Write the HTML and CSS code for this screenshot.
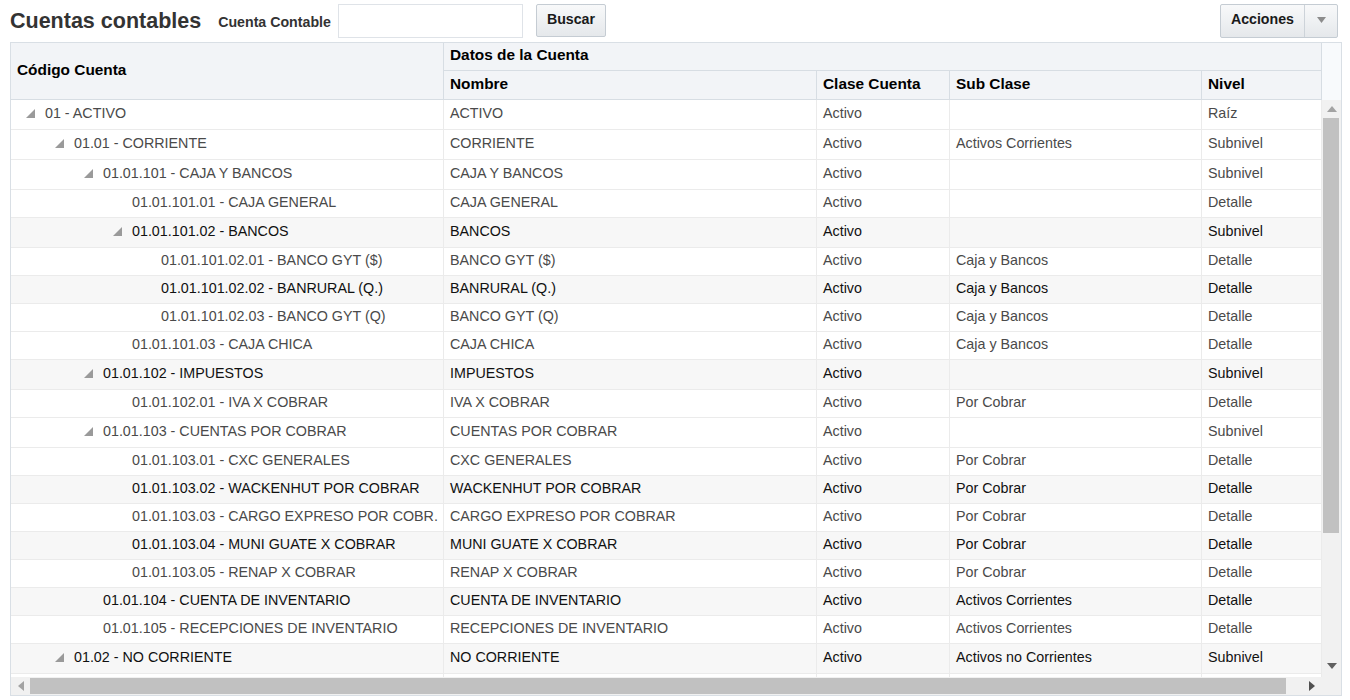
FILE: index.html
```html
<!DOCTYPE html>
<html lang="es">
<head>
<meta charset="utf-8">
<title>Cuentas contables</title>
<link rel="stylesheet" href="styles.css">
</head>
<body>
<div class="page">
  <div class="toolbar">
    <h1 class="title">Cuentas contables</h1>
    <label class="label" for="cta">Cuenta Contable</label>
    <input class="input" id="cta" type="text">
    <button class="btn" type="button">Buscar</button>
    <div class="spacer"></div>
    <div class="split">
      <span class="split-main">Acciones</span>
      <span class="split-arrow"><svg width="9" height="6" viewBox="0 0 9 6"><polygon points="0,0 9,0 4.5,6" fill="#8c8c8c"/></svg></span>
    </div>
  </div>

  <div class="grid">
    <div class="head">
      <div class="head-cols">
        <div class="hc hc-code">Código Cuenta</div>
        <div class="hc hc-group">Datos de la Cuenta</div>
        <div class="hc">Nombre</div>
        <div class="hc">Clase Cuenta</div>
        <div class="hc">Sub Clase</div>
        <div class="hc">Nivel</div>
      </div>
      <div class="head-fill"></div>
    </div>

    <div class="body">
      <div class="rows">
        <div class="row t"><div class="c tree l0"><svg class="tg" viewBox="0 0 9 9"><polygon points="9,0 9,9 0,9"/></svg>01 - ACTIVO</div><div class="c">ACTIVO</div><div class="c">Activo</div><div class="c"></div><div class="c">Raíz</div></div>
        <div class="row t"><div class="c tree l1"><svg class="tg" viewBox="0 0 9 9"><polygon points="9,0 9,9 0,9"/></svg>01.01 - CORRIENTE</div><div class="c">CORRIENTE</div><div class="c">Activo</div><div class="c">Activos Corrientes</div><div class="c">Subnivel</div></div>
        <div class="row t"><div class="c tree l2"><svg class="tg" viewBox="0 0 9 9"><polygon points="9,0 9,9 0,9"/></svg>01.01.101 - CAJA Y BANCOS</div><div class="c">CAJA Y BANCOS</div><div class="c">Activo</div><div class="c"></div><div class="c">Subnivel</div></div>
        <div class="row"><div class="c tree l3"><span class="sp"></span>01.01.101.01 - CAJA GENERAL</div><div class="c">CAJA GENERAL</div><div class="c">Activo</div><div class="c"></div><div class="c">Detalle</div></div>
        <div class="row t band"><div class="c tree l3"><svg class="tg" viewBox="0 0 9 9"><polygon points="9,0 9,9 0,9"/></svg>01.01.101.02 - BANCOS</div><div class="c">BANCOS</div><div class="c">Activo</div><div class="c"></div><div class="c">Subnivel</div></div>
        <div class="row"><div class="c tree l4"><span class="sp"></span>01.01.101.02.01 - BANCO GYT ($)</div><div class="c">BANCO GYT ($)</div><div class="c">Activo</div><div class="c">Caja y Bancos</div><div class="c">Detalle</div></div>
        <div class="row band"><div class="c tree l4"><span class="sp"></span>01.01.101.02.02 - BANRURAL (Q.)</div><div class="c">BANRURAL (Q.)</div><div class="c">Activo</div><div class="c">Caja y Bancos</div><div class="c">Detalle</div></div>
        <div class="row"><div class="c tree l4"><span class="sp"></span>01.01.101.02.03 - BANCO GYT (Q)</div><div class="c">BANCO GYT (Q)</div><div class="c">Activo</div><div class="c">Caja y Bancos</div><div class="c">Detalle</div></div>
        <div class="row"><div class="c tree l3"><span class="sp"></span>01.01.101.03 - CAJA CHICA</div><div class="c">CAJA CHICA</div><div class="c">Activo</div><div class="c">Caja y Bancos</div><div class="c">Detalle</div></div>
        <div class="row t band"><div class="c tree l2"><svg class="tg" viewBox="0 0 9 9"><polygon points="9,0 9,9 0,9"/></svg>01.01.102 - IMPUESTOS</div><div class="c">IMPUESTOS</div><div class="c">Activo</div><div class="c"></div><div class="c">Subnivel</div></div>
        <div class="row"><div class="c tree l3"><span class="sp"></span>01.01.102.01 - IVA X COBRAR</div><div class="c">IVA X COBRAR</div><div class="c">Activo</div><div class="c">Por Cobrar</div><div class="c">Detalle</div></div>
        <div class="row t"><div class="c tree l2"><svg class="tg" viewBox="0 0 9 9"><polygon points="9,0 9,9 0,9"/></svg>01.01.103 - CUENTAS POR COBRAR</div><div class="c">CUENTAS POR COBRAR</div><div class="c">Activo</div><div class="c"></div><div class="c">Subnivel</div></div>
        <div class="row"><div class="c tree l3"><span class="sp"></span>01.01.103.01 - CXC GENERALES</div><div class="c">CXC GENERALES</div><div class="c">Activo</div><div class="c">Por Cobrar</div><div class="c">Detalle</div></div>
        <div class="row band"><div class="c tree l3"><span class="sp"></span>01.01.103.02 - WACKENHUT POR COBRAR</div><div class="c">WACKENHUT POR COBRAR</div><div class="c">Activo</div><div class="c">Por Cobrar</div><div class="c">Detalle</div></div>
        <div class="row"><div class="c tree l3"><span class="sp"></span>01.01.103.03 - CARGO EXPRESO POR COBR.</div><div class="c">CARGO EXPRESO POR COBRAR</div><div class="c">Activo</div><div class="c">Por Cobrar</div><div class="c">Detalle</div></div>
        <div class="row band"><div class="c tree l3"><span class="sp"></span>01.01.103.04 - MUNI GUATE X COBRAR</div><div class="c">MUNI GUATE X COBRAR</div><div class="c">Activo</div><div class="c">Por Cobrar</div><div class="c">Detalle</div></div>
        <div class="row"><div class="c tree l3"><span class="sp"></span>01.01.103.05 - RENAP X COBRAR</div><div class="c">RENAP X COBRAR</div><div class="c">Activo</div><div class="c">Por Cobrar</div><div class="c">Detalle</div></div>
        <div class="row band"><div class="c tree l2"><span class="sp"></span>01.01.104 - CUENTA DE INVENTARIO</div><div class="c">CUENTA DE INVENTARIO</div><div class="c">Activo</div><div class="c">Activos Corrientes</div><div class="c">Detalle</div></div>
        <div class="row"><div class="c tree l2"><span class="sp"></span>01.01.105 - RECEPCIONES DE INVENTARIO</div><div class="c">RECEPCIONES DE INVENTARIO</div><div class="c">Activo</div><div class="c">Activos Corrientes</div><div class="c">Detalle</div></div>
        <div class="row t band"><div class="c tree l1"><svg class="tg" viewBox="0 0 9 9"><polygon points="9,0 9,9 0,9"/></svg>01.02 - NO CORRIENTE</div><div class="c">NO CORRIENTE</div><div class="c">Activo</div><div class="c">Activos no Corrientes</div><div class="c">Subnivel</div></div>
        <div class="row"><div class="c tree l2"></div><div class="c"></div><div class="c"></div><div class="c"></div><div class="c"></div></div>
      </div>
      <div class="vscroll">
        <div class="sb-btn"><svg width="10" height="6" viewBox="0 0 10 6"><polygon points="0,6 10,6 5,0" fill="#a3a3a3"/></svg></div>
        <div class="vthumb"></div>
        <div class="sb-rest"></div>
        <div class="sb-btn down"><svg width="10" height="6" viewBox="0 0 10 6"><polygon points="0,0 10,0 5,6" fill="#606060"/></svg></div>
      </div>
    </div>

    <div class="hscroll">
      <div class="htrack">
        <div class="hb"><svg width="6" height="10" viewBox="0 0 6 10"><polygon points="6,0 6,10 0,5" fill="#a3a3a3"/></svg></div>
        <div class="hthumb"></div>
        <div class="sb-rest"></div>
        <div class="hb"><svg width="6" height="10" viewBox="0 0 6 10"><polygon points="0,0 0,10 6,5" fill="#505050"/></svg></div>
      </div>
      <div class="corner"></div>
    </div>
  </div>
</div>
</body>
</html>
```

FILE: styles.css
```css
html, body {
  margin: 0;
  padding: 0;
  background: #ffffff;
}

body {
  font-family: "Liberation Sans", Arial, sans-serif;
  color: #333333;
}

.page {
  padding: 4px 8px 0 10px;
}

/* toolbar */
.toolbar {
  display: flex;
  align-items: center;
  width: 1332px;
  height: 33px;
  margin-bottom: 5px;
}

.title {
  margin: 0;
  font-size: 21.5px;
  font-weight: bold;
  color: #333333;
  line-height: 24px;
}

.label {
  margin-left: 17px;
  font-size: 14.2px;
  font-weight: bold;
  color: #333333;
  padding-top: 3px;
}

.input {
  box-sizing: border-box;
  width: 185px;
  height: 34px;
  margin: 0 0 0 7px;
  border: 1px solid #dfe3e8;
  background: #ffffff;
  padding: 0 4px;
  font: 14px "Liberation Sans", Arial, sans-serif;
}

.btn {
  box-sizing: border-box;
  height: 33px;
  margin-left: 13px;
  padding: 0 10px 3px 10px;
  border: 1px solid #c5ccd3;
  border-radius: 2px;
  background: linear-gradient(#f8f9fa, #e5e8eb);
  font: bold 14.2px "Liberation Sans", Arial, sans-serif;
  color: #1a1a1a;
}

.spacer {
  flex: 1;
}

.split {
  display: flex;
  height: 34px;
  box-sizing: border-box;
  margin-right: 4px;
  border: 1px solid #c5ccd3;
  border-radius: 2px;
  background: linear-gradient(#f8f9fa, #e5e8eb);
}

.split-main {
  display: flex;
  align-items: center;
  padding: 0 10px 4px 10px;
  font-size: 14.2px;
  font-weight: bold;
  color: #1a1a1a;
  border-right: 1px solid #cdd3d9;
}

.split-arrow {
  display: flex;
  align-items: center;
  justify-content: center;
  width: 32px;
  padding-bottom: 1px;
}

/* grid */
.grid {
  width: 1330px;
  border: 1px solid #d9dfe5;
}

.head {
  display: flex;
}

.head-cols {
  display: grid;
  grid-template-columns: 433px 373px 133px 252px 120px;
  grid-template-rows: 28px 29px;
  background: #f2f4f7;
}

.hc {
  box-sizing: border-box;
  display: flex;
  align-items: center;
  padding: 0 6px 3px 6px;
  border-right: 1px solid #d7dde3;
  border-bottom: 1px solid #d7dde3;
  font-size: 15.4px;
  font-weight: bold;
  color: #000000;
  white-space: nowrap;
}

.hc-code {
  grid-row: 1 / 3;
}

.hc-group {
  grid-column: 2 / 6;
}

.head-fill {
  width: 19px;
  background: #f8fafc;
}

.body {
  display: flex;
  height: 577px;
  overflow: hidden;
}

.rows {
  width: 1311px;
  flex: none;
}

.row {
  display: grid;
  grid-template-columns: 433px 373px 133px 252px 120px;
  height: 28px;
  background: #ffffff;
}

.row.t {
  height: 30px;
}

.row.band {
  background: #f7f7f7;
}

.c {
  box-sizing: border-box;
  display: flex;
  align-items: center;
  padding: 0 6px 3px 6px;
  border-right: 1px solid #ebebeb;
  border-bottom: 1px solid #ebebeb;
  font-size: 14.3px;
  color: #4a4a4a;
  white-space: nowrap;
  overflow: hidden;
}

.row.band .c {
  color: #111111;
}

.tree.l0 { padding-left: 15px; }
.tree.l1 { padding-left: 44px; }
.tree.l2 { padding-left: 73px; }
.tree.l3 { padding-left: 102px; }
.tree.l4 { padding-left: 131px; }

.tg {
  width: 9px;
  height: 9px;
  flex: none;
  margin-right: 10px;
  fill: #9a9a9a;
}

.sp {
  width: 19px;
  flex: none;
}

/* scrollbars */
.vscroll {
  width: 19px;
  flex: none;
  display: flex;
  flex-direction: column;
  background: #f1f1f1;
}

.sb-btn {
  height: 18px;
  flex: none;
  display: flex;
  align-items: center;
  justify-content: center;
}

.sb-btn.down {
  margin-bottom: 2px;
}

.vthumb {
  width: 16px;
  height: 415px;
  margin-left: 1px;
  flex: none;
  background: #c1c1c1;
}

.sb-rest {
  flex: 1;
}

.hscroll {
  display: flex;
  height: 18px;
}

.htrack {
  width: 1310px;
  flex: none;
  display: flex;
  align-items: center;
  background: #f1f1f1;
}

.hb {
  width: 19px;
  height: 18px;
  flex: none;
  display: flex;
  align-items: center;
  justify-content: center;
}

.hthumb {
  width: 1256px;
  height: 16px;
  flex: none;
  background: #c1c1c1;
}

.corner {
  flex: 1;
  background: #f1f1f1;
}
```
